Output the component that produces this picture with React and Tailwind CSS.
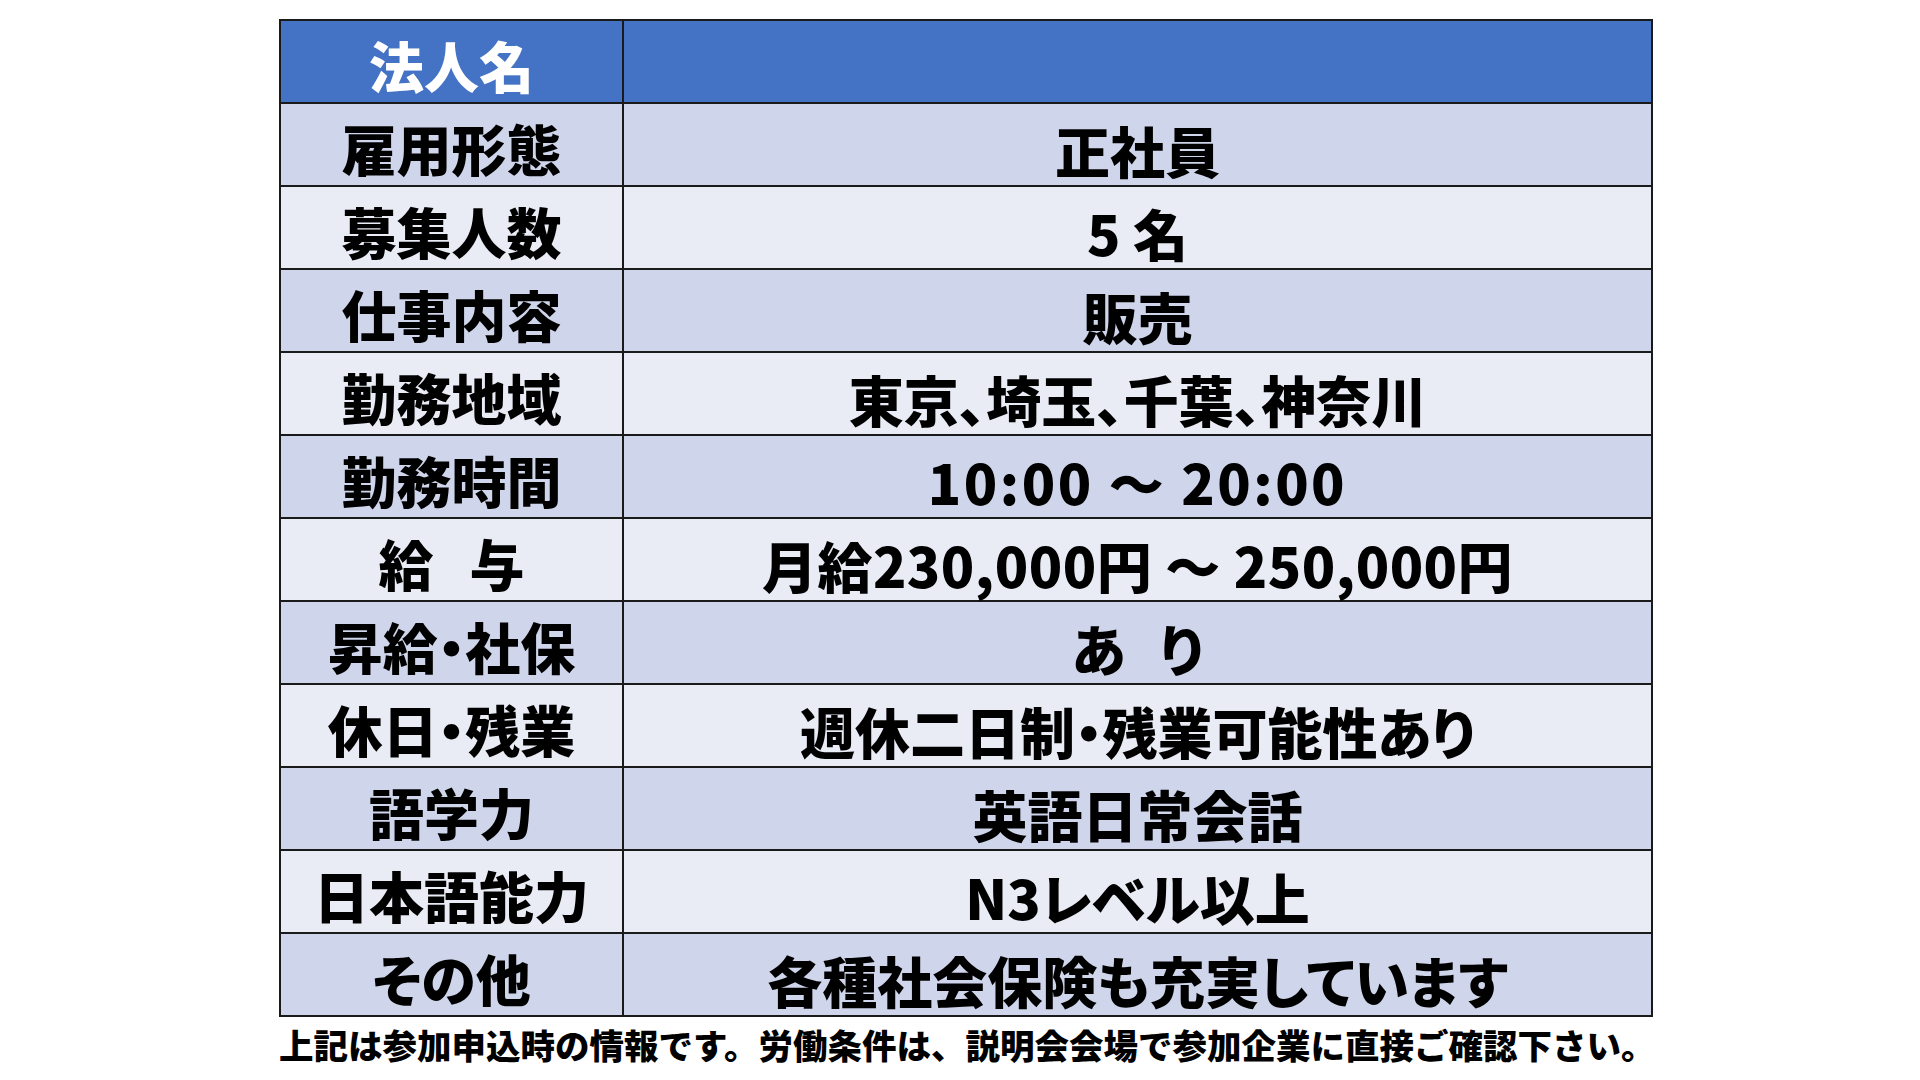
import React from "react";

const rows = [
  { label: "雇用形態", value: "正社員" },
  { label: "募集人数", value: "5 名" },
  { label: "仕事内容", value: "販売" },
  { label: "勤務地域", value: "東京、埼玉、千葉、神奈川" },
  { label: "勤務時間", value: "10:00 ～ 20:00", cls: "tracking-[2.5px]" },
  {
    label: (
      <>
        給<span className="inline-block w-[36px]"></span>与
      </>
    ),
    value: "月給230,000円 ～ 250,000円",
    cls: "tracking-[0.5px]",
  },
  { label: "昇給・社保", value: (
      <>
        あ<span className="inline-block w-[34px]"></span>り
      </>
    ) },
  { label: "休日・残業", value: "週休二日制・残業可能性あり" },
  { label: "語学力", value: "英語日常会話" },
  { label: "日本語能力", value: "N3レベル以上" },
  { label: "その他", value: "各種社会保険も充実しています" },
];

const App = () => {
  return (
    <div
      className="w-[1920px] h-[1080px] bg-white overflow-hidden"
      style={{ fontFamily: '"Noto Sans CJK JP", "Noto Sans", sans-serif' }}
    >
      <div className="pl-[279px] pt-[19px]">
        <table className="w-[1374px] border-collapse border-2 border-[#1a1a1a] table-fixed [font-feature-settings:'palt']">
          <colgroup>
            <col className="w-[343px]" />
            <col />
          </colgroup>
          <tbody>
            {/* 見出し行 */}
            <tr className="h-[83px] bg-[#4472c4]">
              <td className="border-2 border-[#1a1a1a] text-center text-white text-[55px] font-black leading-none pt-[6px]">
                法人名
              </td>
              <td className="border-2 border-[#1a1a1a]"></td>
            </tr>

            {rows.map((row, index) => (
              <tr
                key={index}
                className={
                  "h-[83px] " + (index % 2 === 0 ? "bg-[#cfd5ea]" : "bg-[#e9ebf5]")
                }
              >
                <td className="border-2 border-[#1a1a1a] text-center text-black text-[55px] font-black leading-none pt-[6px] whitespace-nowrap">
                  {row.label}
                </td>
                <td
                  className={
                    "border-2 border-[#1a1a1a] text-center text-black text-[55px] font-black leading-none pt-[10px] whitespace-nowrap " +
                    (row.cls || "")
                  }
                >
                  {row.value}
                </td>
              </tr>
            ))}
          </tbody>
        </table>

        <p className="mt-[10px] text-[34.5px] font-black leading-none text-black whitespace-nowrap">
          上記は参加申込時の情報です。労働条件は、説明会会場で参加企業に直接ご確認下さい。
        </p>
      </div>
    </div>
  );
};

export default App;
